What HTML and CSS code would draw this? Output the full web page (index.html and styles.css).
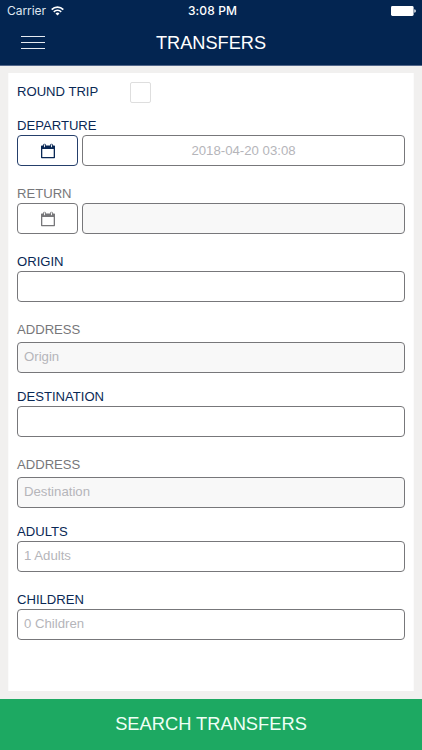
FILE: index.html
```html
<!DOCTYPE html>
<html lang="en">
<head>
<meta charset="utf-8">
<title>Transfers</title>
<link rel="stylesheet" href="styles.css">
</head>
<body>
<div class="screen">
  <header class="header">
    <div class="status">
      <div class="carrier"><span>Carrier</span>
        <svg class="wifi" width="13" height="10" viewBox="0 0 13 10" fill="none" stroke="#fff" stroke-width="1.7"><path d="M.7 3.6a8.2 8.2 0 0 1 11.6 0M2.8 5.8a5.2 5.2 0 0 1 7.4 0"/><path d="M6.5 9.6 4.5 7.5a2.9 2.9 0 0 1 4 0z" fill="#fff" stroke="none"/></svg>
      </div>
      <div class="clock">3:08 PM</div>
      <svg class="battery" width="25" height="10" viewBox="0 0 25 10"><rect width="22.6" height="10" rx="1.4" fill="#fff"/><path d="M23.3 3.2q1.5.3 1.5 1.8t-1.5 1.8z" fill="#fff"/></svg>
    </div>
    <div class="bar">
      <div class="menu"><i></i><i></i><i></i></div>
      <h1 class="title">TRANSFERS</h1>
    </div>
  </header>
  <main class="main">
    <form class="card">
      <div class="trip"><span class="label">ROUND TRIP</span><span class="check"></span></div>
      <div class="field">
        <div class="label">DEPARTURE</div>
        <div class="row">
          <div class="box cal"><svg width="16" height="16" viewBox="0 0 16 16"><path d="M1 3.2q0-.7.7-.7h1.5V2q0-1.2 1.3-1.2T5.8 2v.5h4.4V2q0-1.2 1.3-1.2T12.8 2v.5h1.5q.7 0 .7.7v11.3q0 .7-.7.7H1.7q-.7 0-.7-.7zM2.3 6v7.9h11.4V6z" fill="currentColor" fill-rule="evenodd"/><path d="M4.5 1.8v2M11.5 1.8v2" stroke="#fff" stroke-width=".9" stroke-linecap="round"/></svg></div>
          <div class="box date">2018-04-20 03:08</div>
        </div>
      </div>
      <div class="field off">
        <div class="label">RETURN</div>
        <div class="row">
          <div class="box cal"><svg width="16" height="16" viewBox="0 0 16 16"><path d="M1 3.2q0-.7.7-.7h1.5V2q0-1.2 1.3-1.2T5.8 2v.5h4.4V2q0-1.2 1.3-1.2T12.8 2v.5h1.5q.7 0 .7.7v11.3q0 .7-.7.7H1.7q-.7 0-.7-.7zM2.3 6v7.9h11.4V6z" fill="currentColor" fill-rule="evenodd"/><path d="M4.5 1.8v2M11.5 1.8v2" stroke="#fff" stroke-width=".9" stroke-linecap="round"/></svg></div>
          <div class="box date"></div>
        </div>
      </div>
      <div class="field"><div class="label">ORIGIN</div><div class="box"></div></div>
      <div class="field off address"><div class="label">ADDRESS</div><div class="box">Origin</div></div>
      <div class="field"><div class="label">DESTINATION</div><div class="box"></div></div>
      <div class="field off address"><div class="label">ADDRESS</div><div class="box">Destination</div></div>
      <div class="field"><div class="label">ADULTS</div><div class="box">1 Adults</div></div>
      <div class="field"><div class="label">CHILDREN</div><div class="box">0 Children</div></div>
    </form>
  </main>
  <div class="search">SEARCH TRANSFERS</div>
</div>
</body>
</html>
```
FILE: styles.css
```css
* { box-sizing: border-box; }
body { margin: 0; font-family: "Liberation Sans", Arial, sans-serif; }
.screen { width: 422px; height: 750px; display: flex; flex-direction: column; background: #f1f0ef; overflow: hidden; }
.header { height: 66px; background: #032551; color: #fff; border-bottom: 1px solid #53678a; flex: none; }
.status { height: 21px; display: grid; grid-template-columns: 1fr auto 1fr; align-items: center; padding: 0 6px 0 7px; font-family: Inter, sans-serif; font-size: 12px; }
.carrier { display: flex; align-items: center; gap: 5px; color: #dfe6f0; letter-spacing: -0.05px; }
.clock { font-weight: 500; letter-spacing: 0.1px; padding-left: 2px; }
.battery { justify-self: end; }
.bar { height: 44px; display: grid; grid-template-columns: 56px 1fr 56px; align-items: center; }
.menu { display: flex; flex-direction: column; gap: 5px; padding: 0 11px 2px 21px; }
.menu i { height: 1px; background: #e6ebf2; }
.title { margin: 0; font-size: 18.2px; font-weight: 400; text-align: center; line-height: 42px; }
.main { flex: 1; padding: 7px 8px 8px; }
.card { height: 618px; background: #fff; padding: 8px 8px 0; border: 1px solid #fbfbfb; border-width: 0 1px; }
.trip { height: 22px; display: flex; align-items: center; }
.trip .label { width: 113px; }
.check { width: 21px; height: 21px; border: 1px solid #dedede; border-radius: 2px; }
.label { height: 17px; font-size: 13.1px; line-height: 15px; color: #092855; }
.field { margin-top: 20px; }
.trip + .field { margin-top: 15px; }
.address { margin-top: 20px; }
.address .label { height: 20px; line-height: 16px; }
.address + .field { margin-top: 16px; }
.row { display: flex; gap: 4px; }
.box { height: 31px; border: 1px solid #77777a; border-radius: 4px; background: #fff; padding: 0 6px; font-size: 13.2px; line-height: 28px; color: #b5b5ba; }
.cal { width: 61px; display: flex; align-items: center; justify-content: center; border-color: #253f6b; color: #092855; }
.date { flex: 1; text-align: center; line-height: 29px; }
.off .label, .off .cal { color: #77777a; }
.off .cal { border-color: #77777a; }
.off .box:not(.cal) { background: #f8f8f8; }
.search { height: 51px; background: #1da962; color: #effff5; text-align: center; font-size: 18.3px; line-height: 50px; flex: none; }
```
